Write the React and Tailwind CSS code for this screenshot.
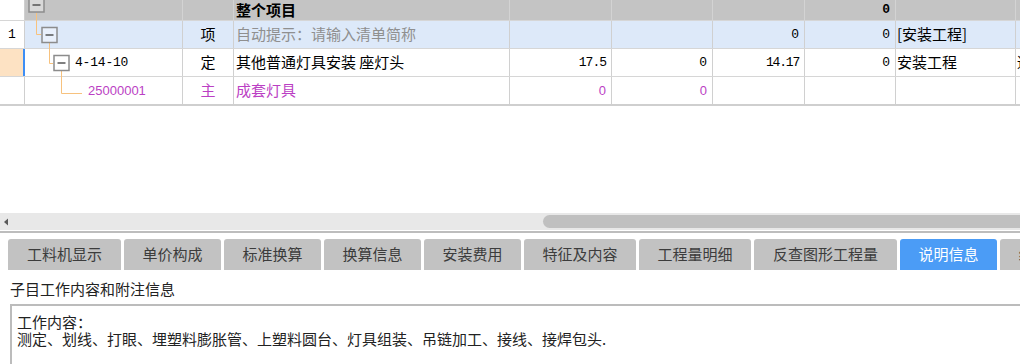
import React from "react";

const cjk = { fontFamily: '"Noto Sans CJK SC", "Liberation Sans", sans-serif' };
const mono = { fontFamily: '"Liberation Mono", "Noto Sans CJK SC", monospace' };
const sans = { fontFamily: '"Liberation Sans", sans-serif' };

const tabs = [
  { label: "工料机显示", w: "w-[113px]" },
  { label: "单价构成", w: "w-[97px]" },
  { label: "标准换算", w: "w-[97px]" },
  { label: "换算信息", w: "w-[97px]" },
  { label: "安装费用", w: "w-[97px]" },
  { label: "特征及内容", w: "w-[112px]" },
  { label: "工程量明细", w: "w-[112px]" },
  { label: "反查图形工程量", w: "w-[143px]" },
  { label: "说明信息", w: "w-[97px]", active: true },
  { label: "组价方案", w: "w-[97px]" },
];

// tree connectors and collapse boxes, drawn over the code column
const TreeLines = () => (
  <svg
    className="absolute left-[25px] top-0 pointer-events-none"
    width="158"
    height="106"
    viewBox="0 0 158 106"
  >
    <g fill="none" stroke="#f7c27e" strokeWidth="1">
      <path d="M11.5 13 V34.5 H16" />
      <path d="M24.5 43 V63.5 H28" />
      <path d="M36.5 71 V93.5 H57" />
    </g>
    <g fill="rgba(255,255,255,0.35)" stroke="#8c8c8c" strokeWidth="1.5">
      <rect x="4" y="-3" width="15" height="15" />
      <rect x="17" y="27.5" width="15" height="15" />
      <rect x="29" y="55.5" width="15" height="15" />
    </g>
    <g stroke="#4a4a4a" strokeWidth="1.4">
      <path d="M7.5 5 H15.5" />
      <path d="M20.5 35 H28.5" />
      <path d="M32.5 63 H40.5" />
    </g>
  </svg>
);

export default function App() {
  return (
    <div className="w-[1020px] h-[364px] overflow-hidden bg-white text-black" style={cjk}>
      {/* grid */}
      <div className="relative h-[213px]">
        {/* header */}
        <div className="flex h-[21px] border-b border-[#d6d6d6]">
          <div className="w-[25px] shrink-0 bg-white border-r border-[#cfcfcf]" />
          <div className="flex flex-1 bg-[#c4c4c4]">
            <div className="w-[158px] shrink-0 border-r border-[#d3d3d3]" />
            <div className="w-[51px] shrink-0 border-r border-[#d3d3d3]" />
            <div className="w-[276px] shrink-0 border-r border-[#d3d3d3] pl-[2px] text-[15px] font-bold leading-[20px]">
              整个项目
            </div>
            <div className="w-[102px] shrink-0 border-r border-[#d3d3d3]" />
            <div className="w-[101px] shrink-0 border-r border-[#d3d3d3]" />
            <div className="w-[92px] shrink-0 border-r border-[#d3d3d3]" />
            <div className="w-[91px] shrink-0 border-r border-[#d3d3d3] pr-[5px] text-right text-[13px] font-bold leading-[20px]" style={mono}>
              0
            </div>
            <div className="w-[120px] shrink-0 border-r border-[#d3d3d3]" />
            <div className="flex-1" />
          </div>
        </div>

        {/* row 1 */}
        <div className="flex h-[28px] border-b border-[#d6d6d6] text-[15px]">
          <div className="w-[25px] shrink-0 bg-white border-r border-[#cfcfcf] flex items-center justify-center text-[13px]" style={mono}>
            1
          </div>
          <div className="flex flex-1 bg-[#dde9f9]">
            <div className="w-[158px] shrink-0 border-r border-[#d0d0d0]" />
            <div className="w-[51px] shrink-0 border-r border-[#d0d0d0] flex items-center justify-center">项</div>
            <div className="w-[276px] shrink-0 border-r border-[#d0d0d0] flex items-center pl-[2px] text-[#8f8f8f]">
              自动提示：请输入清单简称
            </div>
            <div className="w-[102px] shrink-0 border-r border-[#d0d0d0]" />
            <div className="w-[101px] shrink-0 border-r border-[#d0d0d0]" />
            <div className="w-[92px] shrink-0 border-r border-[#d0d0d0] flex items-center justify-end pr-[5px] text-[13px]" style={mono}>0</div>
            <div className="w-[91px] shrink-0 border-r border-[#d0d0d0] flex items-center justify-end pr-[5px] text-[13px]" style={mono}>0</div>
            <div className="w-[120px] shrink-0 border-r border-[#d0d0d0] flex items-center pl-[1px] whitespace-nowrap">[安装工程]</div>
            <div className="flex-1" />
          </div>
        </div>

        {/* row 2 (current) */}
        <div className="flex h-[28px] border-b border-[#d6d6d6] text-[15px]">
          <div className="w-[25px] shrink-0 bg-[#fde2c3] border-r-2 border-[#3d8ef5]" />
          <div className="w-[158px] shrink-0 border-r border-[#d0d0d0] flex items-center pl-[50px] text-[13px] tracking-[-0.2px]" style={mono}>
            4-14-10
          </div>
          <div className="w-[51px] shrink-0 border-r border-[#d0d0d0] flex items-center justify-center">定</div>
          <div className="w-[276px] shrink-0 border-r border-[#d0d0d0] flex items-center pl-[2px] whitespace-nowrap">
            其他普通灯具安装 座灯头
          </div>
          <div className="w-[102px] shrink-0 border-r border-[#d0d0d0] flex items-center justify-end pr-[5px] text-[13px] tracking-[-1px]" style={mono}>17.5</div>
          <div className="w-[101px] shrink-0 border-r border-[#d0d0d0] flex items-center justify-end pr-[5px] text-[13px]" style={mono}>0</div>
          <div className="w-[92px] shrink-0 border-r border-[#d0d0d0] flex items-center justify-end pr-[5px] text-[13px] tracking-[-1.2px]" style={mono}>14.17</div>
          <div className="w-[91px] shrink-0 border-r border-[#d0d0d0] flex items-center justify-end pr-[5px] text-[13px]" style={mono}>0</div>
          <div className="w-[120px] shrink-0 border-r border-[#d0d0d0] flex items-center pl-[1px] whitespace-nowrap">安装工程</div>
          <div className="flex-1 overflow-hidden flex items-center pl-[1px] whitespace-nowrap">适</div>
        </div>

        {/* row 3 */}
        <div className="flex h-[29px] border-b-2 border-[#cfcfcf] text-[15px] text-[#bb3fc4]">
          <div className="w-[25px] shrink-0 bg-white border-r border-[#cfcfcf]" />
          <div className="w-[158px] shrink-0 border-r border-[#d0d0d0] flex items-center pl-[63px] text-[13px]" style={sans}>
            25000001
          </div>
          <div className="w-[51px] shrink-0 border-r border-[#d0d0d0] flex items-center justify-center">主</div>
          <div className="w-[276px] shrink-0 border-r border-[#d0d0d0] flex items-center pl-[2px]">成套灯具</div>
          <div className="w-[102px] shrink-0 border-r border-[#d0d0d0] flex items-center justify-end pr-[5px] text-[13px]" style={sans}>0</div>
          <div className="w-[101px] shrink-0 border-r border-[#d0d0d0] flex items-center justify-end pr-[5px] text-[13px]" style={sans}>0</div>
          <div className="w-[92px] shrink-0 border-r border-[#d0d0d0]" />
          <div className="w-[91px] shrink-0 border-r border-[#d0d0d0]" />
          <div className="w-[120px] shrink-0 border-r border-[#d0d0d0]" />
          <div className="flex-1" />
        </div>

        <TreeLines />
      </div>

      {/* horizontal scrollbar */}
      <div className="flex items-center h-[17px] bg-[#e8e8e8]">
        <svg width="10" height="10" viewBox="0 0 10 10" className="ml-[2px]">
          <path d="M2 5 L6 1.5 V8.5 Z" fill="#5a5a5a" />
        </svg>
        <div className="ml-[531px] h-[13px] flex-1 rounded-l-full bg-[#c0c0c0]" />
      </div>
      <div className="h-[2px] mt-[1px] bg-[#bdbdbd]" />

      {/* tabs */}
      <div className="flex gap-[3px] pl-[8px] pt-[6px] h-[39px] whitespace-nowrap">
        {tabs.map((t) => (
          <div
            key={t.label}
            className={`${t.w} shrink-0 h-[31px] rounded-t-[3px] flex items-center justify-center text-[15px] ${
              t.active ? "bg-[#4b9cf6] text-white" : "bg-[#c2c2c2] text-[#3c3c3c]"
            }`}
          >
            {t.label}
          </div>
        ))}
      </div>

      {/* notes */}
      <div className="h-[32px] flex items-center pl-[10px] pt-[3px] text-[15px] text-[#222]">
        子目工作内容和附注信息
      </div>
      <div className="ml-[10px] h-[70px] border-t-2 border-l-2 border-[#bcbcbc] pl-[5px] pt-[7px] text-[15px] leading-[17px] text-[#222] whitespace-nowrap">
        <div>工作内容：</div>
        <div>测定、划线、打眼、埋塑料膨胀管、上塑料圆台、灯具组装、吊链加工、接线、接焊包头.</div>
      </div>
    </div>
  );
}
